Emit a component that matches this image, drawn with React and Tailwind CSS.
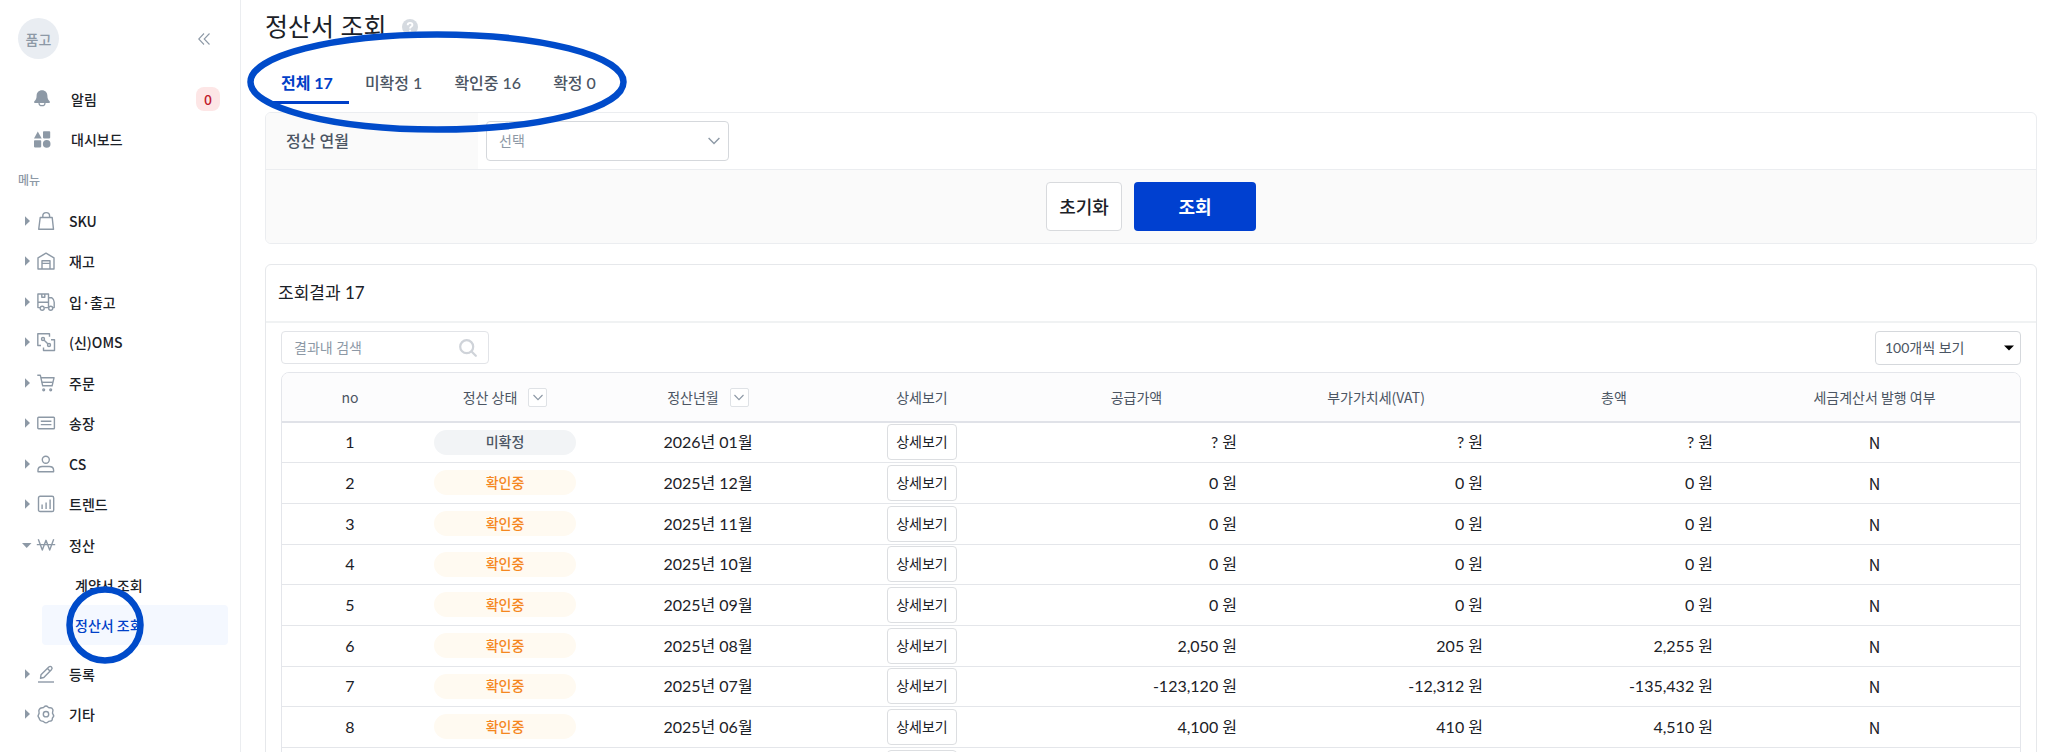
import React from 'react';

const ICONS = {
  sku: (
    <>
      <path d="M3.2 5.5h12l1.3 11.8H1.7z" />
      <path d="M5.8 5.4V4a3.4 3.4 0 0 1 6.8 0v1.4" />
    </>
  ),
  stock: (
    <>
      <path d="M1 17V5.8L9 1.2l8 4.6V17z" />
      <path d="M5 17V8.8h8V17M5 11.4h8" />
    </>
  ),
  truck: (
    <>
      <path d="M3 14.6H.9V1h10.6v13.6H7.6" />
      <path d="M11.5 4.8h3.4c1.6 1 2.3 2.6 2.3 4.4v5.4H16M1 9.200h10.500M4.800 1v3.200h3V1" />
      <circle cx="5.2" cy="15.3" r="2" />
      <circle cx="13.7" cy="15.3" r="2" />
    </>
  ),
  oms: (
    <>
      <path d="M4 12.5H.8V.8h11.700v3" />
      <path d="M14 6.8h3.500v10.700h-11v-3" />
      <circle cx="6" cy="6" r="1.5" />
      <circle cx="12" cy="12" r="1.5" />
      <path d="M7.200 7.200l3.600 3.600" />
    </>
  ),
  cart: (
    <>
      <path d="M.3 1.200h3l2.400 10.600h9.400L17 3.800H4" />
      <path d="M4.600 8.300h11.200" />
      <circle cx="6.7" cy="15.8" r=".9" />
      <circle cx="13.7" cy="15.8" r=".9" />
    </>
  ),
  invoice: (
    <>
      <rect x=".8" y="3.3" width="16.600" height="11.400" rx=".8" />
      <path d="M3.800 7.300h10.600M3.800 10.600h10.600" />
    </>
  ),
  person: (
    <>
      <circle cx="8.8" cy="4.7" r="3.500" />
      <path d="M1 16.700v-1.500c0-2.400 2-3.700 4.400-3.700h6.800c2.400 0 4.400 1.300 4.400 3.700v1.500z" />
    </>
  ),
  trend: (
    <>
      <rect x="1.5" y="1.3" width="15.200" height="15.200" rx="1.600" />
      <path d="M5.100 14V9.500M9.100 14V7.400M13.100 14V4.600" />
    </>
  ),
  won: <path d="M1.300 3.300L5.300 14 9 4.300 12.700 14l4-10.700M-.2 8.600h18.400" />,
  pen: (
    <>
      <path d="M1 17h16" />
      <path d="M3.500 13.300l.5-3.500 7.800-7.700c.9-.9 2-.9 2.700-.1.800.8.800 1.800-.1 2.700L6.800 12.500zM10.500 3.500l2.700 2.700" />
    </>
  ),
  gear: (
    <>
      <path d="M7.200 1.800c.8-1.100 2.800-1.100 3.600 0 .5.700 1.200 1.100 2.100 1 1.300-.1 2.400.5 2.900 1.700.3.800.2 1.500-.1 2.200-.5 1.100-.3 1.800.3 2.500.9 1.100.7 2.600-.2 3.400-.5.500-.6 1-.5 1.600-.1 1.300-1.200 2-2.400 1.900-.9 0-1.500.3-2.100 1-.8 1-2.800 1-3.600 0-.6-.7-1.200-1-2.100-1-1.300.1-2.300-.6-2.600-1.900-.2-.7-.4-1.200-.8-1.700-.8-1-.8-2.200 0-3.200.5-.7.600-1.300.3-2.200C1.500 5.600 2.300 3 5.100 2.800c.9.100 1.600-.3 2.100-1z" />
      <circle cx="9" cy="9.2" r="2.700" />
    </>
  ),
};

const MENU = [
  ['SKU', 'sku'],
  ['재고', 'stock'],
  ['입·출고', 'truck'],
  ['(신)OMS', 'oms'],
  ['주문', 'cart'],
  ['송장', 'invoice'],
  ['CS', 'person'],
  ['트렌드', 'trend'],
  ['정산', 'won'],
];

const MENU_END = [
  ['등록', 'pen'],
  ['기타', 'gear'],
];

const TABS = ['전체 17', '미확정 1', '확인중 16', '확정 0'];

const ROWS = [
  ['미확정', '2026년 01월', '?', '?', '?'],
  ['확인중', '2025년 12월', '0', '0', '0'],
  ['확인중', '2025년 11월', '0', '0', '0'],
  ['확인중', '2025년 10월', '0', '0', '0'],
  ['확인중', '2025년 09월', '0', '0', '0'],
  ['확인중', '2025년 08월', '2,050', '205', '2,255'],
  ['확인중', '2025년 07월', '-123,120', '-12,312', '-135,432'],
  ['확인중', '2025년 06월', '4,100', '410', '4,510'],
  ['확인중', '2025년 05월', '0', '0', '0'],
];

const KR = "font-['Noto_Sans_CJK_KR',sans-serif]";

function MenuItem({ label, icon }) {
  const open = icon === 'won';
  return (
    <li className="h-[41px] nth-[2n]:h-[40px]">
      <a href="#menu" className="flex h-full items-center pl-[22px]">
        <svg viewBox="0 0 10 10" className="size-[10px] shrink-0" fill="#8d99a6" aria-hidden="true">
          {open ? <path d="M0 3h9.500L4.700 8z" /> : <path d="M3 .2l5 4.800-5 4.800z" />}
        </svg>
        <svg
          viewBox="0 0 18 18"
          className="ml-[5px] size-[18px] shrink-0 overflow-visible"
          fill="none"
          stroke="#8d99a6"
          strokeWidth="1.4"
          strokeLinejoin="round"
          aria-hidden="true"
        >
          {ICONS[icon]}
        </svg>
        <span className="ml-[14px]">{label}</span>
      </a>
    </li>
  );
}

function Chevron({ className }) {
  return (
    <svg viewBox="0 0 12 8" className={className} fill="none" stroke="#8d99a6" strokeWidth="1.4" aria-hidden="true">
      <path d="M.6 1L6 6.600 11.400 1" />
    </svg>
  );
}

function Sidebar() {
  return (
    <aside className={`w-[241px] shrink-0 border-r border-[#ebedf0] text-sm font-medium text-[#1b2127] ${KR}`}>
      <div className="flex items-center justify-between pt-[18px] pr-[30px] pl-[18px]">
        <span className="flex size-[41px] items-center justify-center rounded-full bg-[#e9edf2] text-[#8d99a6]">품고</span>
        <button type="button" aria-label="메뉴 접기">
          <svg viewBox="0 0 12 12" className="size-[12px]" fill="none" stroke="#8d99a6" strokeWidth="1.1">
            <path d="M6 .5L.7 6 6 11.500M11.500 .5L6.200 6l5.300 5.500" />
          </svg>
        </button>
      </div>
      <a href="#alarm" className="mt-[19px] flex h-[41px] items-center pr-[20px] pl-[34px]">
        <svg viewBox="0 0 16 17" className="h-[17px] w-[16px]" fill="#8d99a6" aria-hidden="true">
          <path d="M8 .2c3.300 0 5.400 2.400 5.400 5.600 0 2.500.6 3.900 2 5.100.9.800.5 2-.6 2H1.200c-1.100 0-1.500-1.200-.6-2 1.400-1.200 2-2.600 2-5.100C2.600 2.600 4.700.2 8 .2z" />
          <path d="M5 12.900a3 2.800 0 0 0 6 0" fill="#fff" stroke="#8d99a6" strokeWidth="1.200" />
        </svg>
        <span className="ml-[21px] flex-1">알림</span>
        <span className="flex size-[24px] items-center justify-center rounded-lg bg-[#fde6e6] text-[#c0202e]">0</span>
      </a>
      <a href="#dashboard" className="flex h-[40px] items-center pl-[34px]">
        <svg viewBox="0 0 17 17" className="size-[17px]" fill="#8d99a6" aria-hidden="true">
          <path d="M3.800.4L7.700 7.400H0z" />
          <rect x="9" y=".3" width="7.200" height="7.100" rx=".8" />
          <rect x="0" y="9.300" width="7.200" height="7.100" rx=".8" />
          <circle cx="12.700" cy="12.900" r="3.800" />
        </svg>
        <span className="ml-5">대시보드</span>
      </a>
      <p className="flex h-[41px] items-center pt-px pl-[18px] text-xs text-[#8d99a6]">메뉴</p>
      <ul>
        {MENU.map(([label, icon]) => (
          <MenuItem key={icon} label={label} icon={icon} />
        ))}
      </ul>
      <div className="relative pr-[12px] pl-[42px]">
        <a href="#contract" className="flex h-[40px] items-center pl-[33px]">계약서 조회</a>
        <a href="#settlement" className="flex h-[40px] items-center rounded bg-[#f4f8ff] pl-[33px] text-[#0040c8]">
          정산서 조회
        </a>
        <svg viewBox="0 0 78 78" className="pointer-events-none absolute top-[21px] left-[66px] size-[78px]" fill="none" stroke="#004bca" strokeWidth="6.500" aria-hidden="true">
          <circle cx="39" cy="39" r="35.500" />
        </svg>
      </div>
      <ul className="mt-2">
        {MENU_END.map(([label, icon]) => (
          <MenuItem key={icon} label={label} icon={icon} />
        ))}
      </ul>
    </aside>
  );
}

function FilterCard() {
  return (
    <form className="overflow-hidden rounded-md border border-[#ebedf0]">
      <div className="flex h-[57px] border-b border-[#ebedf0]">
        <label htmlFor="month" className="flex w-[212px] items-center bg-[#fafafa] pl-5 font-medium text-[#4b5563]">
          정산 연월
        </label>
        <div className="relative flex w-[251px] items-center pl-2">
          <select id="month" className="h-[40px] w-full appearance-none rounded border border-[#d5d8dc] bg-white pl-3 text-sm text-[#8d99a6]">
            <option>선택</option>
          </select>
          <Chevron className="pointer-events-none absolute right-[9px] h-[8px] w-[12px]" />
        </div>
      </div>
      <div className="flex h-[73px] items-center justify-center gap-3 bg-[#fafafa] text-lg">
        <button type="button" className="h-[49px] w-[76px] rounded border border-[#d8dadd] bg-white font-medium text-[#1b2127]">
          초기화
        </button>
        <button type="button" className="h-[49px] w-[122px] rounded bg-[#0040d0] font-bold text-white">
          조회
        </button>
      </div>
    </form>
  );
}

function HeadCell({ children, filter }) {
  return (
    <th scope="col" className="font-normal">
      <span className="flex items-center justify-center gap-[11px]">
        {children}
        {filter && (
          <button type="button" aria-label={`${children} 필터`} className="flex size-[19px] items-center justify-center rounded-xs border border-[#dfe2e6] bg-white">
            <Chevron className="h-[7px] w-[10px]" />
          </button>
        )}
      </span>
    </th>
  );
}

function ResultTable() {
  return (
    <div className="overflow-hidden rounded-t-lg border border-[#e4e6eb]">
      <table className="w-full table-fixed border-collapse text-center text-[#1b2127]">
        <colgroup>
          <col className="w-[136px]" />
          <col className="w-[174px]" />
          <col className="w-[232px]" />
          <col className="w-[196px]" />
          <col className="w-[233px]" />
          <col className="w-[246px]" />
          <col className="w-[230px]" />
          <col />
        </colgroup>
        <thead>
          <tr className={`h-[49px] border-b-2 border-[#e0e2e8] bg-[#fcfcfd] text-sm text-[#4b5563] ${KR}`}>
            <HeadCell>no</HeadCell>
            <HeadCell filter>정산 상태</HeadCell>
            <HeadCell filter>정산년월</HeadCell>
            <HeadCell>상세보기</HeadCell>
            <HeadCell>공급가액</HeadCell>
            <HeadCell>부가가치세(VAT)</HeadCell>
            <HeadCell>총액</HeadCell>
            <HeadCell>세금계산서 발행 여부</HeadCell>
          </tr>
        </thead>
        <tbody>
          {ROWS.map(([state, month, supply, vat, total], i) => (
            <tr key={month} className="h-[41px] border-b border-[#e4e6ea] nth-[3n+1]:h-[40px]">
              <td>{i + 1}</td>
              <td>
                <span
                  className={`mx-auto flex h-[25px] w-[142px] items-center justify-center rounded-full text-sm font-medium ${
                    state === '미확정' ? 'bg-[#f2f4f6] text-[#4b5563]' : 'bg-[#fffaf1] text-[#f5871f]'
                  }`}
                >
                  {state}
                </span>
              </td>
              <td>{month}</td>
              <td>
                <button type="button" className="mx-auto block h-[36px] w-[70px] rounded border border-[#dcdee1] bg-white text-sm">
                  상세보기
                </button>
              </td>
              <td className="pr-4 text-right">{supply} 원</td>
              <td className="pr-4 text-right">{vat} 원</td>
              <td className="pr-4 text-right">{total} 원</td>
              <td className={KR}>N</td>
            </tr>
          ))}
        </tbody>
      </table>
    </div>
  );
}

export default function App() {
  return (
    <div className="flex h-screen overflow-hidden bg-white font-['Lato','Noto_Sans_CJK_KR',sans-serif] text-base text-[#1b2127]">
      <Sidebar />
      <main className="min-w-0 flex-1 pr-[11px] pl-6">
        <header className="flex h-[54px] items-center gap-4">
          <h1 className="text-[25px]">정산서 조회</h1>
          <button type="button" aria-label="도움말" className="size-4 rounded-full bg-[#d5dae0] text-white">
            <svg viewBox="0 0 16 16" className="size-4" fill="none" stroke="currentColor" strokeWidth="1.900" aria-hidden="true">
              <path d="M5.700 6.200c0-1.400 1-2.300 2.400-2.300 1.300 0 2.300.8 2.300 2 0 1.700-2.300 1.700-2.300 3.500M8.100 10.800v1.800" />
            </svg>
          </button>
        </header>
        <nav className="relative flex h-[58px] pt-[9px]">
          {TABS.map((tab, i) => (
            <a
              key={tab}
              href="#tab"
              className={`flex h-[41px] items-center border-b-3 px-4 pt-[2px] ${
                i === 0 ? 'border-[#0040c8] font-bold text-[#0040c8]' : 'border-transparent font-medium text-[#4b5563]'
              }`}
            >
              {tab}
            </a>
          ))}
          <svg viewBox="0 0 380 102" className="pointer-events-none absolute -top-[23px] -left-[18px] z-10 h-[102px] w-[380px]" fill="none" stroke="#004bca" strokeWidth="6.500" aria-hidden="true">
            <ellipse cx="190" cy="51" rx="186.500" ry="47.500" />
          </svg>
        </nav>
        <FilterCard />
        <section className="mt-5 rounded-t-md border border-[#e6e8eb]">
          <h2 className="flex h-[58px] items-center border-b-2 border-[#f0f2f3] pl-3 text-[17px]">조회결과 17</h2>
          <div className="px-[15px]">
            <div className="flex h-[49px] items-center justify-between">
              <div className="relative flex items-center">
                <input
                  type="search"
                  aria-label="결과내 검색"
                  placeholder="결과내 검색"
                  className="h-[33px] w-[208px] rounded border border-[#e2e4e8] bg-white pl-3 text-sm placeholder:text-[#8d99a6]"
                />
                <svg viewBox="0 0 18 18" className="pointer-events-none absolute right-[12px] size-[18px]" fill="none" stroke="#cfd3d9" strokeWidth="2.200" strokeLinecap="round" aria-hidden="true">
                  <circle cx="7.700" cy="7.700" r="6.500" />
                  <path d="M12.500 12.500l4.300 4.300" />
                </svg>
              </div>
              <div className="relative flex items-center">
                <select aria-label="보기 개수" className="h-[34px] w-[146px] appearance-none rounded border border-[#d5d8dc] bg-white pl-[9px] text-sm text-[#4b5563]">
                  <option>100개씩 보기</option>
                </select>
                <svg viewBox="0 0 10 6" className="pointer-events-none absolute right-[7px] h-[6px] w-[10px]" fill="#000" aria-hidden="true">
                  <path d="M0 .5h10L5 5.500z" />
                </svg>
              </div>
            </div>
            <ResultTable />
          </div>
        </section>
      </main>
    </div>
  );
}
